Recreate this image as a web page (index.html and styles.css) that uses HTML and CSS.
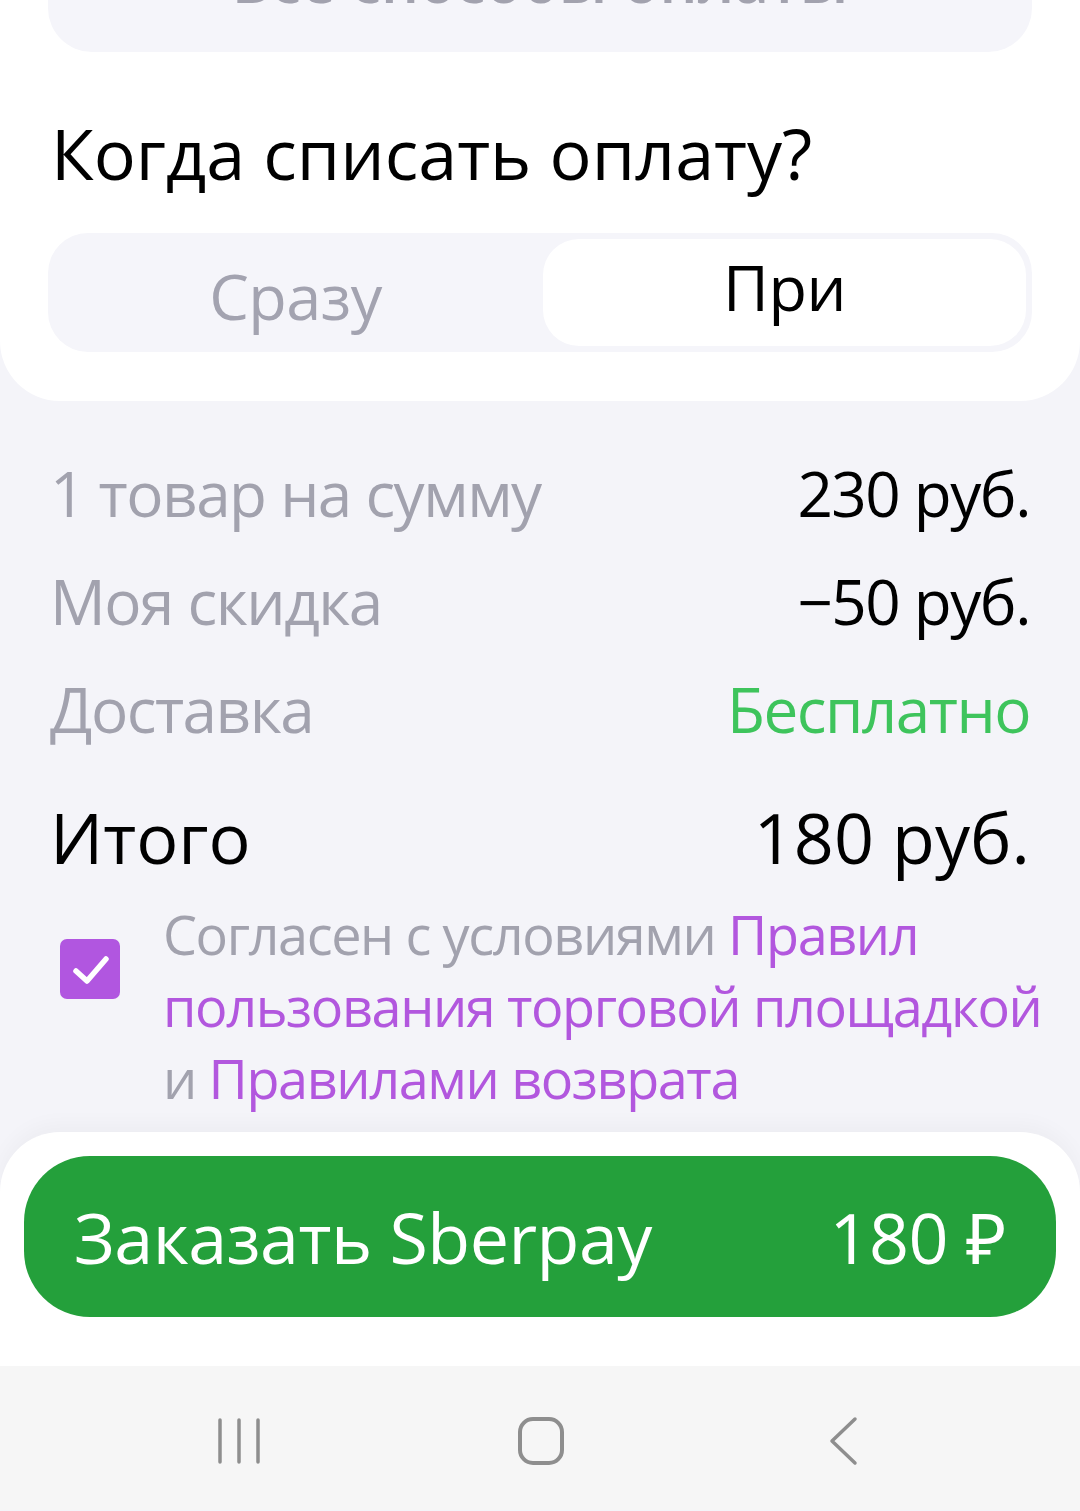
FILE: index.html
```html
<!DOCTYPE html>
<html lang="ru">
<head>
<meta charset="UTF-8" />
<meta name="viewport" content="width=device-width, initial-scale=1" />
<title>Оформление заказа</title>
<link rel="stylesheet" href="styles.css">
</head>
<body>

<section class="pay-card">
  <div class="all-methods">Все способы оплаты</div>
  <h2 class="pay-title">Когда списать оплату?</h2>
  <div class="segmented">
    <div class="seg seg-off">Сразу</div>
    <div class="seg seg-on">При</div>
  </div>
</section>

<section class="summary">
  <div class="row">
    <span class="label">1 товар на сумму</span>
    <span class="value">230 руб.</span>
  </div>
  <div class="row">
    <span class="label">Моя скидка</span>
    <span class="value">−50 руб.</span>
  </div>
  <div class="row">
    <span class="label">Доставка</span>
    <span class="value free">Бесплатно</span>
  </div>
  <div class="row total">
    <span>Итого</span>
    <span>180 руб.</span>
  </div>
</section>

<div class="agree">
  <span class="checkbox">
    <svg viewBox="0 0 60 60" width="60" height="60">
      <path d="M16 32 L27 42 L46 20" fill="none" stroke="#fff" stroke-width="5.5" stroke-linecap="round" stroke-linejoin="round"/>
    </svg>
  </span>
  <p class="agree-text">Согласен с условиями <a href="#">Правил<br>пользования торговой площадкой</a><br>и <a href="#">Правилами возврата</a></p>
</div>

<div class="order-bar">
  <button class="order-btn">
    <span>Заказать Sberpay</span>
    <span>180 ₽</span>
  </button>
</div>

<nav class="sys-nav">
  <svg viewBox="0 0 44 48" width="44" height="48">
    <path d="M3 3 V45 M22 3 V45 M41 3 V45" stroke="#8e8e8e" stroke-width="3.5" stroke-linecap="round"/>
  </svg>
  <svg viewBox="0 0 48 50" width="48" height="50">
    <rect x="3" y="3" width="42" height="44" rx="13" fill="none" stroke="#8e8e8e" stroke-width="4"/>
  </svg>
  <svg viewBox="0 0 32 50" width="32" height="50">
    <path d="M28 3 L5 25 L28 47" fill="none" stroke="#8e8e8e" stroke-width="3.5" stroke-linecap="round" stroke-linejoin="round"/>
  </svg>
</nav>

</body>
</html>
```

FILE: styles.css
```css
body {
  margin: 0;
  width: 1080px;
  height: 1511px;
  overflow: hidden;
  background-color: #f4f4f9;
  font-family: 'Open Sans', 'Noto Sans', sans-serif;
  color: #000;
}
.pay-card {
  background: #fff;
  border-radius: 0 0 60px 60px;
  padding: 0 48px 49px;
}
.all-methods {
  margin-top: -68px;
  height: 102px;
  padding-top: 18px;
  background: #f5f5fa;
  border-radius: 0 0 44px 44px;
  color: #a2a2ae;
  font-size: 60px;
  line-height: 60px;
  font-weight: 600;
  text-align: center;
}
.pay-title {
  margin: 61px 0 0 3px;
  font-size: 70px;
  line-height: 80px;
  font-weight: 400;
  letter-spacing: 0;
}
.segmented {
  margin-top: 40px;
  height: 107px;
  padding: 6px;
  display: grid;
  grid-template-columns: 1fr 1fr;
  gap: 6px;
  background: #f5f5fa;
  border-radius: 40px;
}
.seg {
  display: flex;
  align-items: center;
  justify-content: center;
  font-size: 63px;
  letter-spacing: -0.5px;
  border-radius: 36px;
}
.seg-off {
  color: #a3a3b0;
  padding-top: 6px;
}
.seg-on {
  background: #fff;
  padding-bottom: 12px;
}
.summary {
  padding: 38px 50px 0 50px;
}
.row {
  display: flex;
  justify-content: space-between;
  font-size: 62px;
  line-height: 108px;
  letter-spacing: -1.5px;
}
.row .label {
  color: #a2a2ae;
}
.row .free {
  color: #3ec45c;
}
.row.total {
  margin-top: 20px;
  font-size: 70px;
  letter-spacing: 0;
}
.agree {
  display: flex;
  margin-top: 7px;
  padding-left: 60px;
}
.checkbox {
  flex: none;
  width: 60px;
  height: 60px;
  margin-top: 41px;
  background: #b156e0;
  border-radius: 7px;
}
.checkbox svg {
  display: block;
}
.agree-text {
  margin: 0 0 0 43px;
  color: #a2a2ae;
  font-size: 54px;
  line-height: 72px;
  letter-spacing: -1.4px;
  white-space: nowrap;
}
.agree-text a {
  color: #b257de;
  text-decoration: none;
}
.order-bar {
  margin-top: 18px;
  background: #fff;
  border-radius: 60px 60px 0 0;
  padding: 24px 24px 49px;
  box-shadow: 0 -8px 20px rgba(0, 0, 0, 0.03);
}
.order-btn {
  width: 100%;
  height: 161px;
  display: flex;
  align-items: center;
  justify-content: space-between;
  padding: 0 50px;
  border: none;
  border-radius: 66px;
  background: #24a03b;
  color: #fff;
  font-family: 'Open Sans', 'Noto Sans', sans-serif;
  font-size: 70px;
  letter-spacing: -0.5px;
}
.sys-nav {
  height: 144px;
  background: #f6f6f6;
  display: flex;
  align-items: center;
  padding-top: 6px;
  box-sizing: border-box;
}
.sys-nav svg:nth-child(1) {
  margin-left: 217px;
}
.sys-nav svg:nth-child(2) {
  margin-left: 256px;
}
.sys-nav svg:nth-child(3) {
  margin-left: 262px;
}
```
